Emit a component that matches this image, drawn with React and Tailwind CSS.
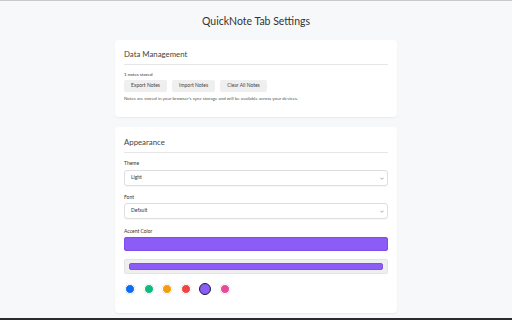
import React from 'react';

const colors = [
  { c: 'bg-[#0b6cf5]', ring: false },
  { c: 'bg-[#10b981]', ring: false },
  { c: 'bg-[#f59e0b]', ring: false },
  { c: 'bg-[#ef4444]', ring: false },
  { c: 'bg-[#8b5cf6]', ring: true },
  { c: 'bg-[#ec4899]', ring: false },
];

const Select = ({ value }) => (
  <div className="h-[16px] border border-[#dedede] rounded-[3px] bg-white flex items-center justify-between pl-[6px] pr-[3px] shadow-[0_1px_1px_rgba(0,0,0,0.03)]">
    <span className="text-[5px] text-[#333]">{value}</span>
    <svg width="4" height="3" viewBox="0 0 10 6" className="text-[#777]">
      <path d="M1 1l4 4 4-4" fill="none" stroke="currentColor" strokeWidth="1.6" />
    </svg>
  </div>
);

const Heading = ({ children }) => (
  <div className="border-b border-[#e6e6e6] pb-[4px]">
    <h2 className="text-[7.8px] leading-[11px] text-[#444]">{children}</h2>
  </div>
);

export default function App() {
  return (
    <div className="h-[320px] bg-[#f7f8fa] border-t border-[#c9cacc] overflow-hidden font-['Lato',sans-serif] text-[#333] relative">
      <h1 className="text-center text-[10.5px] leading-[14px] text-[#333] pt-[13px]">QuickNote Tab Settings</h1>

      <div className="w-[282px] mx-auto mt-[12px] bg-white rounded-[4px] shadow-[0_1px_2px_rgba(0,0,0,0.06)] px-[9px] pt-[9px] pb-[15px]">
        <Heading>Data Management</Heading>
        <div className="text-[4.5px] leading-[6px] mt-[7px]">1 notes stored</div>
        <div className="flex gap-[5px] mt-[2px]">
          {['Export Notes', 'Import Notes', 'Clear All Notes'].map((t) => (
            <button key={t} className="h-[12px] px-[7px] bg-[#efefef] rounded-[2px] text-[5px] text-[#444]">{t}</button>
          ))}
        </div>
        <p className="text-[4.5px] leading-[6px] text-[#555] mt-[4px]">Notes are stored in your browser's sync storage and will be available across your devices.</p>
      </div>

      <div className="w-[282px] mx-auto mt-[10px] bg-white rounded-[4px] shadow-[0_1px_2px_rgba(0,0,0,0.06)] px-[9px] pt-[10px] pb-[18px]">
        <Heading>Appearance</Heading>
        <div className="text-[5px] leading-[6px] mt-[7px] mb-[4px]">Theme</div>
        <Select value="Light" />
        <div className="text-[5px] leading-[6px] mt-[8px] mb-[3px]">Font</div>
        <Select value="Default" />
        <div className="text-[5px] leading-[6px] mt-[9px] mb-[3px]">Accent Color</div>
        <div className="h-[14px] bg-[#8b5cf6] rounded-[2px] border border-[#7c4dea]"></div>
        <div className="h-[15px] mt-[8px] bg-[#efefef] border border-[#e4e4e4] rounded-[2px] flex items-center px-[4px]">
          <div className="h-[7px] w-full bg-[#8b5cf6] rounded-[2px] border border-[#7a55e0]"></div>
        </div>
        <div className="flex items-center gap-[8.6px] mt-[9px] pl-[1px]">
          {colors.map((o, i) => (
            <span key={i} className={`block rounded-full ${o.c} ${o.ring ? 'w-[12px] h-[12px] border border-[#1e1b3a]' : 'w-[10px] h-[10px] border border-white shadow-[0_0_0_0.5px_rgba(0,0,0,0.08)]'}`}></span>
          ))}
        </div>
      </div>

      <div className="absolute bottom-0 left-0 right-0 h-[2px] bg-[#2b2b2d]"></div>
    </div>
  );
}
